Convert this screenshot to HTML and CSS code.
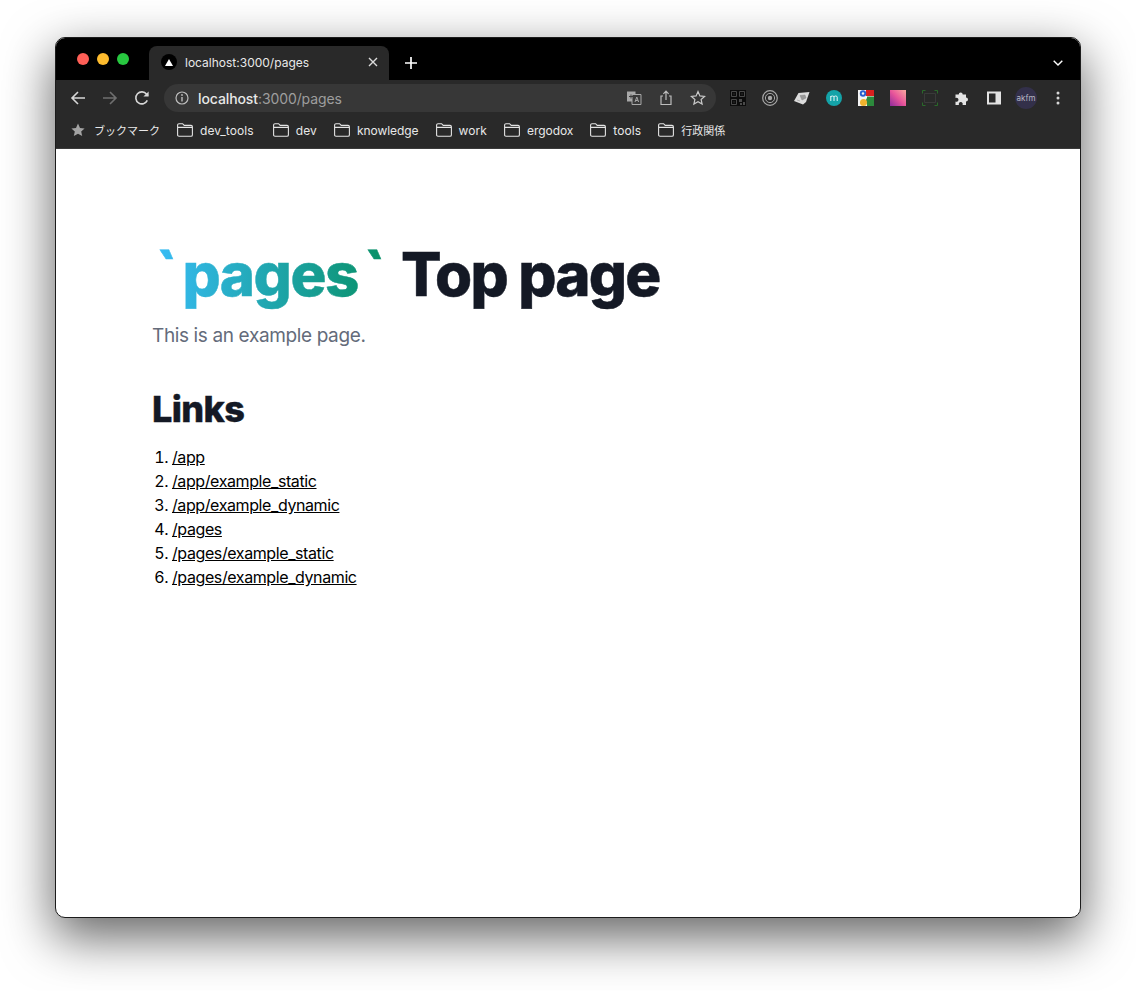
FILE: index.html
```html
<!DOCTYPE html>
<html lang="en">
<head>
    <meta charset="UTF-8">
    <title>localhost:3000/pages</title>
    <link rel="stylesheet" href="styles.css">
</head>
<body>
    <svg class="sprites" width="0" height="0">
        <symbol id="folder" viewBox="0 0 16 14">
            <path d="M.6 12V2.2C.6 1.300 1.200.7 2 .7h3.600l1.600 1.700H14c.8 0 1.400.6 1.400 1.400V12c0 .8-.6 1.300-1.400 1.300H2C1.200 13.300.6 12.800.6 12zM.6 4.400h14.800" fill="none" stroke="#e3e3e3" stroke-width="1.100"/>
        </symbol>
    </svg>

    <div class="window">
        <!-- Tab strip -->
        <div class="tabstrip">
            <div class="lights">
                <span class="light red"></span>
                <span class="light yellow"></span>
                <span class="light green"></span>
            </div>
            <div class="tab">
                <span class="favicon"><svg width="8" height="7" viewBox="0 0 8 7"><path d="M4 0l4 7H0z" fill="#fff"/></svg></span>
                <span class="tab-title">localhost:3000/pages</span>
                <svg class="tab-close" width="10" height="10" viewBox="0 0 10 10"><path d="M1 1l8 8M9 1l-8 8" stroke="#dcdcdc" stroke-width="1.400"/></svg>
            </div>
            <svg class="new-tab" width="12" height="12" viewBox="0 0 12 12"><path d="M6 0v12M0 6h12" stroke="#fff" stroke-width="1.700"/></svg>
            <svg class="tab-menu" width="10" height="6" viewBox="0 0 10 6"><path d="M.7.7L5 5l4.300-4.300" fill="none" stroke="#fff" stroke-width="1.400"/></svg>
        </div>

        <!-- Toolbar -->
        <div class="toolbar">
            <svg class="tool" viewBox="0 0 16 16"><path d="M15 8H2M8 2L2 8l6 6" fill="none" stroke="#d6d6d6" stroke-width="1.600"/></svg>
            <svg class="tool" viewBox="0 0 16 16"><path d="M1 8h13M8 2l6 6-6 6" fill="none" stroke="#6f6f6f" stroke-width="1.600"/></svg>
            <svg class="tool" viewBox="0 0 16 16"><path d="M13.300 10.400A6 6 0 1 1 12.600 4.200L14 5.600" fill="none" stroke="#d6d6d6" stroke-width="1.600"/><path d="M14.600 1.400v5.200H9.400z" fill="#d6d6d6"/></svg>
            <div class="omnibox">
                <svg class="info" viewBox="0 0 14 14"><circle cx="7" cy="7" r="6" fill="none" stroke="#bdbdbd" stroke-width="1.200"/><path d="M7 6v4.400" stroke="#bdbdbd" stroke-width="1.400"/><circle cx="7" cy="4" r=".9" fill="#bdbdbd"/></svg>
                <span class="url"><span class="host">localhost</span>:3000/pages</span>
                <div class="omni-actions">
                    <svg class="tool" viewBox="0 0 16 16"><path d="M1 1.500h8.500v10H1z" fill="#a8a8a8"/><path d="M6 4.500h9v10H6z" fill="#3a3a3a" stroke="#a8a8a8"/><path d="M3 6.500h4M5 4.500v4" stroke="#3a3a3a"/><path d="M9 12l1.800-5 1.800 5M9.800 10.500h2" fill="none" stroke="#a8a8a8"/></svg>
                    <svg class="tool" viewBox="0 0 16 16"><path d="M5 6H3v8.500h10V6h-2M8 10V1.400M5.400 3.800L8 1.200l2.600 2.600" fill="none" stroke="#bdbdbd" stroke-width="1.200"/></svg>
                    <svg class="tool" viewBox="0 0 16 16"><path d="M8 1.600l1.900 4.300 4.700.5-3.500 3.100 1 4.600L8 11.800l-4.100 2.300 1-4.600-3.500-3.100 4.700-.5z" fill="none" stroke="#c8c8c8" stroke-width="1.200"/></svg>
                </div>
            </div>
            <div class="extensions">
                <svg class="tool" viewBox="0 0 16 16"><path d="M0 0h16v16H0z" fill="#0c0c0c"/><path d="M1.500 1.500h5v5h-5zM9.500 1.500h5v5h-5zM1.500 9.500h5v5h-5z" fill="none" stroke="#4a4a4a"/><path d="M3.500 3.500h1v1h-1zM11.500 3.500h1v1h-1zM3.500 11.500h1v1h-1zM9 9h3v3H9zM13 12h2v3h-2zM10 13h2v2h-2z" fill="#4a4a4a"/></svg>
                <svg class="tool" viewBox="0 0 16 16"><circle cx="8" cy="8" r="7.300" fill="none" stroke="#a8a8a8" stroke-width="1.200"/><circle cx="8" cy="8" r="4.600" fill="none" stroke="#a8a8a8"/><circle cx="8" cy="8" r="2.200" fill="#a8a8a8"/></svg>
                <svg class="tool" viewBox="0 0 16 16"><path d="M4.500 3l11-1-3.500 10-3 2.500L0 11z" fill="#dcdcdc"/><path d="M6 5.500l5-.5 1 3-4 2zM3 10l3 1" fill="#999" stroke="#888" stroke-width=".5"/></svg>
                <svg class="tool" viewBox="0 0 16 16"><circle cx="8" cy="8" r="8" fill="#14a3a8"/><path d="M4.800 11V6M4.800 7q0-1 1.600-1T8 7.200V11M8 7.200Q8 6 9.600 6t1.600 1.200V11" fill="none" stroke="#e8f8f8"/></svg>
                <svg class="tool" viewBox="0 0 16 16"><path d="M0 0h16v16H0z" fill="#f4f4f4"/><path d="M8 0h8v6H8z" fill="#d8201f"/><path d="M9 6.500h7V16H9z" fill="#2c8a3c"/><circle cx="12" cy="11" r="4" fill="#2c8a3c"/><circle cx="5" cy="3.500" r="3.200" fill="#2a5fd0"/><circle cx="5.500" cy="12.500" r="3.500" fill="#efb32e"/><circle cx="5" cy="3.500" r="1.200" fill="#f4f4f4"/></svg>
                <svg class="tool" viewBox="0 0 16 16"><defs><linearGradient id="pinkfade" x1="0" y1="1" x2="1" y2="0"><stop offset="0" stop-color="#8e2a9c"/><stop offset=".5" stop-color="#e8559a"/><stop offset="1" stop-color="#f9a99e"/></linearGradient></defs><path d="M0 0h16v16H0z" fill="url(#pinkfade)"/></svg>
                <svg class="tool" viewBox="0 0 16 16"><path d="M.5 3.500v-3h3M12.500.5h3v3M15.500 12.500v3h-3M3.500 15.500h-3v-3" fill="none" stroke="#2a6a2a"/><path d="M2.500 3.500h11v9h-11z" fill="none" stroke="#3a3a3a"/></svg>
                <svg class="tool" viewBox="0 0 16 16"><path d="M1.500 4.500h3.200a2 2 0 1 1 4 0h3.300v3a2 2 0 1 1 0 4v3.500H8.500a2 2 0 1 0-3.500 0H1.500v-3.500a2 2 0 1 0 0-3.500z" fill="#e3e3e3"/></svg>
                <svg class="tool" viewBox="0 0 16 16"><path d="M1 1.500h14v13H1z" fill="#e3e3e3"/><path d="M3 3.500h6.500v9H3z" fill="#292929"/></svg>
                <span class="avatar">akfm</span>
                <svg class="tool" viewBox="0 0 16 16"><circle cx="8" cy="3" r="1.500" fill="#d6d6d6"/><circle cx="8" cy="8" r="1.500" fill="#d6d6d6"/><circle cx="8" cy="13" r="1.500" fill="#d6d6d6"/></svg>
            </div>
        </div>

        <!-- Bookmarks bar -->
        <div class="bookmarks">
            <div class="bookmark first">
                <svg width="14" height="14" viewBox="0 0 14 14"><path d="M7 .6l2 4.300 4.600.5-3.400 3.100 1 4.600L7 10.800l-4.200 2.300 1-4.600L.4 5.400 5 4.900z" fill="#a3a3a3"/></svg>
                <span class="jp">ブックマーク</span>
            </div>
            <div class="bookmark wide"><svg class="folder"><use href="#folder"/></svg>dev_tools</div>
            <div class="bookmark"><svg class="folder"><use href="#folder"/></svg>dev</div>
            <div class="bookmark narrow"><svg class="folder"><use href="#folder"/></svg>knowledge</div>
            <div class="bookmark"><svg class="folder"><use href="#folder"/></svg>work</div>
            <div class="bookmark narrow"><svg class="folder"><use href="#folder"/></svg>ergodox</div>
            <div class="bookmark"><svg class="folder"><use href="#folder"/></svg>tools</div>
            <div class="bookmark"><svg class="folder"><use href="#folder"/></svg><span class="jp">行政関係</span></div>
        </div>

        <!-- Page -->
        <main class="page">
            <h1 class="title"><span class="gradient"><span class="tick-open">`</span>pages<span class="tick-close">`</span></span> <span class="title-rest">Top page</span></h1>
            <p class="lead">This is an example page.</p>
            <h2 class="links-title">Links</h2>
            <ol class="links">
                <li><a href="#">/app</a></li>
                <li><a href="#">/app/example_static</a></li>
                <li><a href="#">/app/example_dynamic</a></li>
                <li><a href="#">/pages</a></li>
                <li><a href="#">/pages/example_static</a></li>
                <li><a href="#">/pages/example_dynamic</a></li>
            </ol>
        </main>
    </div>
</body>
</html>
```

FILE: styles.css
```css
/* General styling */
body {
    margin: 0;
    height: 991px;
    padding: 37px 55px 0;
    box-sizing: border-box;
    background-color: #fff;
    font-family: Inter, "Noto Sans", sans-serif;
    overflow: hidden;
}
.sprites {
    position: absolute;
}

/* Window frame */
.window {
    height: 881px;
    box-sizing: border-box;
    border: 1px solid #1c1c1c;
    border-radius: 10px;
    background-color: #fff;
    box-shadow: 0 18px 50px 2px rgba(0, 0, 0, 0.6);
    overflow: hidden;
    display: flex;
    flex-direction: column;
}

/* Tab strip */
.tabstrip {
    height: 42px;
    flex: none;
    background-color: #000;
    display: flex;
    align-items: flex-end;
    padding-left: 21px;
}
.lights {
    display: flex;
    gap: 8px;
    align-self: flex-start;
    margin-top: 15px;
    margin-right: 20px;
}
.light {
    width: 12px;
    height: 12px;
    border-radius: 50%;
}
.red { background-color: #ff5f57; }
.yellow { background-color: #febc2e; }
.green { background-color: #28c840; }
.tab {
    width: 240px;
    height: 34px;
    box-sizing: border-box;
    padding: 0 11px 2px 12px;
    background-color: #292929;
    border-radius: 8px 8px 0 0;
    display: flex;
    align-items: center;
    color: #e8e8e8;
    font-size: 12px;
}
.favicon {
    width: 16px;
    height: 16px;
    border-radius: 50%;
    background-color: #000;
    display: flex;
    align-items: center;
    justify-content: center;
    margin-right: 8px;
}
.tab-title {
    flex: 1;
}
.new-tab {
    margin: 0 0 11px 16px;
}
.tab-menu {
    margin: 0 17px 14px auto;
}

/* Toolbar */
.toolbar {
    height: 36px;
    flex: none;
    box-sizing: border-box;
    background-color: #292929;
    display: flex;
    align-items: center;
    gap: 16px;
    padding-left: 14px;
}
.tool {
    width: 16px;
    height: 16px;
    flex: none;
}
.omnibox {
    width: 552px;
    height: 28px;
    margin-left: -2px;
    margin-right: -2px;
    border-radius: 14px;
    background-color: #373737;
    display: flex;
    align-items: center;
    padding: 0 10px 0 11px;
    box-sizing: border-box;
}
.info {
    width: 14px;
    height: 14px;
    margin-right: 9px;
}
.url {
    font-size: 14px;
    letter-spacing: -0.1px;
    color: #9e9e9e;
    flex: 1;
}
.host {
    color: #e8e8e8;
    font-weight: 500;
}
.omni-actions {
    display: flex;
    gap: 16px;
}
.extensions {
    display: flex;
    align-items: center;
    gap: 16px;
}
.avatar {
    width: 22px;
    height: 22px;
    margin: 0 -3px;
    border-radius: 50%;
    background-color: #33304a;
    color: #b8b8c4;
    font-size: 8px;
    display: flex;
    align-items: center;
    justify-content: center;
}

/* Bookmarks bar */
.bookmarks {
    height: 33px;
    flex: none;
    box-sizing: border-box;
    padding: 0 0 4px 15px;
    background-color: #292929;
    border-bottom: 1px solid #3b3b3b;
    display: flex;
    align-items: center;
    gap: 17px;
    color: #e8e8e8;
    font-size: 12px;
    letter-spacing: 0.1px;
}
.bookmark {
    display: flex;
    align-items: center;
    gap: 7px;
}
.first {
    gap: 9px;
}
.wide {
    padding-right: 2px;
}
.narrow {
    letter-spacing: -0.05px;
}
.folder {
    width: 16px;
    height: 14px;
}
.jp {
    font-family: "Noto Sans CJK JP", sans-serif;
    font-size: 11px;
    letter-spacing: 0;
}

/* Page content */
.page {
    flex: 1;
    padding: 95px 96px;
    color: #000;
}
.title {
    margin: 0;
    font-size: 60px;
    line-height: 60px;
    font-weight: 800;
    letter-spacing: -0.025em;
    color: #141925;
    -webkit-text-stroke: 0.5px;
}
.title-rest {
    letter-spacing: -0.03em;
}
.gradient {
    background: linear-gradient(to right, #38bdf8, #078f63);
    -webkit-background-clip: text;
    background-clip: text;
    color: transparent;
}
.tick-open {
    padding: 0 6px 0 3px;
}
.tick-close {
    padding: 0 5px 0 5px;
}
.lead {
    margin: 18px 0 0;
    font-size: 19px;
    line-height: 28px;
    letter-spacing: -0.37px;
    color: #646b7a;
}
.links-title {
    margin: 39px 0 16px;
    font-size: 36px;
    line-height: 40px;
    font-weight: 800;
    letter-spacing: -0.6px;
    color: #141925;
    -webkit-text-stroke: 0.4px;
}
.links {
    margin: 0;
    padding-left: 20px;
    font-size: 16px;
    line-height: 24px;
    letter-spacing: -0.4px;
}
.links a {
    color: #000;
}
```
